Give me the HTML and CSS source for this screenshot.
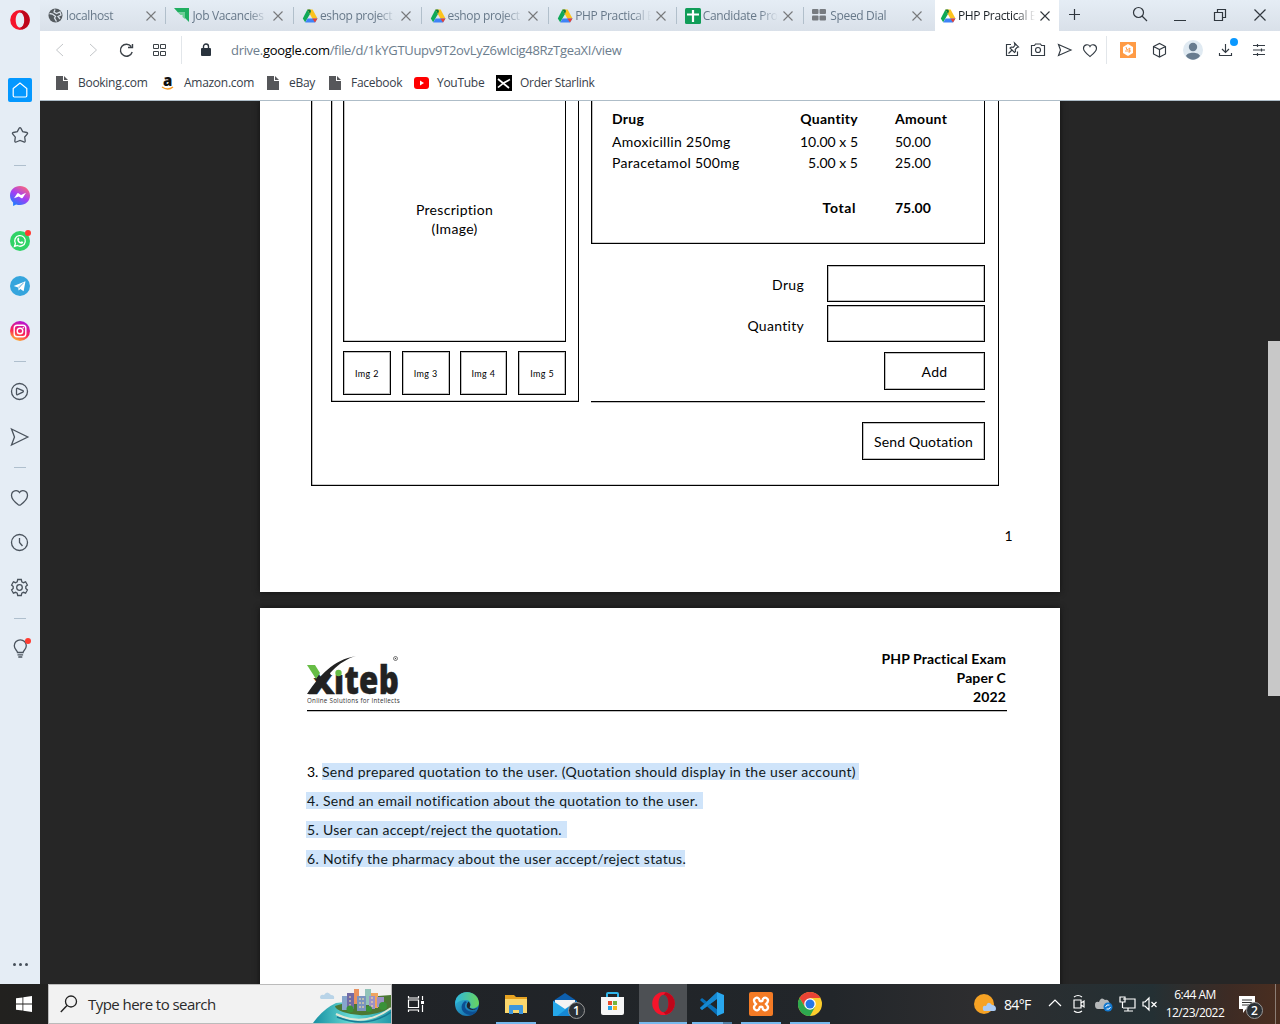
FILE: index.html
```html
<!DOCTYPE html>
<html lang="en">
<head>
<meta charset="utf-8">
<title>PHP Practical Exam</title>
<link rel="stylesheet" href="styles.css">
</head>
<body>
<svg width="0" height="0" class="sprite">
  <symbol id="drive" viewBox="0 0 16 16"><path fill="#0fa958" d="M5.400 1.500 8 6 3.200 14.300.8 10.600z"/><path fill="#fcc31e" d="M5.400 1.500h5.200l4.900 9h-5.200z"/><path fill="#3f83f8" d="M3.200 14.400 5.600 10.400H15.500L13 14.400z"/><path fill="#e94235" d="m10.300 10.400h5.200L13 14.400z"/><path fill="#0a7a3b" d="M5.400 1.500h2.800L9 3 8 6z"/></symbol>
  <symbol id="x" viewBox="0 0 10 10"><path d="m.5.5 9 9m0-9-9 9" fill="none" stroke="currentColor" stroke-width="1.1"/></symbol>
  <symbol id="doc" viewBox="0 0 12 14"><path fill="#56575a" d="M0 0h7v5h5v9H0z"/><path fill="#56575a" d="M8 0l4 4H8z"/></symbol>
  <symbol id="opera" viewBox="0 0 20 20"><path fill="#f5142b" fill-rule="evenodd" d="M10 0a9.800 10 0 1 0 0 20 9.800 10 0 0 0 0-20zm0 2.400c2.500 0 4.300 3.300 4.300 7.600s-1.800 7.600-4.300 7.600-4.300-3.300-4.300-7.600 1.800-7.600 4.300-7.600z"/><path fill="#a70014" d="M12 .2a9.800 10 0 0 1 0 19.600l-2-2.200c2.500 0 4.300-3.300 4.300-7.600S12.500 2.400 10 2.400z" opacity=".7"/></symbol>
</svg>
<div class="screen">
  <nav class="sidebar">
    <div class="logo"><svg width="20" height="20"><use href="#opera"/></svg></div>
    <div class="slot"><span class="home"><svg width="24" height="24" viewBox="0 0 24 24"><path d="M5.200 10.500 12 5l6.800 5.500v7.300q0 1.200-1.200 1.200H6.400q-1.200 0-1.200-1.200z" stroke="#fff" stroke-width="1.200"/></svg></span></div>
    <div class="slot"><svg width="20" height="20" viewBox="0 0 20 20"><path d="M9.200 3.200q.8-1.200 1.600 0l1.900 3.400 4 .9q1.500.4.500 1.600l-2.500 2.900.5 4q0 1.400-1.400.9L10 15.400 6.200 17q-1.400.5-1.400-.9l.5-4L2.800 9.200q-1-1.300.5-1.700l4-.9z"/></svg></div>
    <div class="rule"></div>
    <div class="slot"><svg width="20" height="20" viewBox="0 0 20 20"><defs><linearGradient id="ms" x1=".2" y1="1" x2=".8" y2="0"><stop offset="0" stop-color="#1283ff"/><stop offset=".5" stop-color="#a43df5"/><stop offset="1" stop-color="#ff6a75"/></linearGradient></defs><path stroke="none" fill="url(#ms)" d="M10 0C4.400 0 0 4 0 9.500c0 2.900 1.200 5.300 3.100 7V20l3-1.500q2 .6 3.900.6c5.600 0 10-4 10-9.500S15.600 0 10 0z"/><path stroke="none" fill="#fff" d="m4 12.300 3-4.600q.8-1 1.800-.3l2.200 1.700 5-2.300-3.200 5q-.8.900-1.700.3L8.800 10.400z"/></svg></div>
    <div class="slot"><span class="dotted"><svg width="20" height="20" viewBox="0 0 20 20"><circle cx="10" cy="10" r="10" fill="#2fd366" stroke="none"/><path stroke="#fff" stroke-width="1.300" d="m4.500 15.500.9-3a5.300 5.300 0 1 1 2 2z"/><path fill="#fff" stroke="none" d="M7.600 7q.8-.9 1.300.1l.5 1.200-.6.9q.8 1.400 2.100 1.800l.8-.8 1.600.8q0 1.900-2 1.800Q7.700 12 7.200 8.700z"/></svg><i></i></span></div>
    <div class="slot"><svg width="20" height="20" viewBox="0 0 20 20"><circle cx="10" cy="10" r="10" fill="#35a5dd" stroke="none"/><path fill="#fff" stroke="none" d="M3.700 9.900 15.500 5.200l-1.900 10-3.300-2.300-1.700 1.700-.5-3.200z"/><path stroke="#7fbfe2" stroke-width=".8" d="m8 11.500 5.500-4.600-4.800 5.600"/></svg></div>
    <div class="slot"><svg width="20" height="20" viewBox="0 0 20 20"><defs><linearGradient id="ig" x1=".2" y1="1" x2=".6" y2="0"><stop offset="0" stop-color="#ffc52e"/><stop offset=".45" stop-color="#fb1f55"/><stop offset="1" stop-color="#b615d8"/></linearGradient></defs><circle cx="10" cy="10" r="10" fill="url(#ig)" stroke="none"/><g stroke="#fff" stroke-width="1.400"><rect x="4.200" y="4.200" width="11.600" height="11.600" rx="3"/><circle cx="10" cy="10" r="2.800"/></g><circle cx="13.300" cy="6.700" r=".8" fill="#fff" stroke="none"/></svg></div>
    <div class="rule"></div>
    <div class="slot"><svg width="20" height="20" viewBox="0 0 20 20"><circle cx="9.500" cy="9.500" r="8"/><path d="M6.500 7q.1-1 1.100-.7l5.200 2.300q1.200.7 0 1.500l-5.200 2.600q-1 .3-1.100-.7z"/></svg></div>
    <div class="slot"><svg width="20" height="20" viewBox="0 0 20 20"><path d="m1.500 2 16.300 8-16.300 8 3-8z"/></svg></div>
    <div class="rule"></div>
    <div class="slot"><svg width="20" height="20" viewBox="0 0 20 20"><path d="M9.500 4.500C7.500 1.300 1.500 2.100 1.500 7.500c0 4 4.500 7.500 6.800 9.200q1.200.8 2.400 0C13 15 17.500 11.500 17.500 7.500c0-5.400-6-6.200-8-3z"/></svg></div>
    <div class="slot"><svg width="20" height="20" viewBox="0 0 20 20"><circle cx="9.500" cy="9.500" r="8"/><path d="M9.500 5V9.500l3 3.500"/></svg></div>
    <div class="slot"><svg width="20" height="20" viewBox="0 .5 20 20"><circle cx="9.500" cy="10" r="2.800"/><path d="M7.700 2h3.600l.5 2.300 1.600.9 2.200-.9 1.800 3.200-1.600 1.500v2l1.600 1.500-1.800 3.200-2.200-.9-1.600.9-.5 2.300H7.700l-.5-2.300-1.600-.9-2.200.9-1.800-3.200L3.200 11V9L1.600 7.500l1.800-3.200 2.200.9 1.600-.9z"/></svg></div>
    <div class="rule"></div>
    <div class="slot"><span class="dotted"><svg width="20" height="20" viewBox="0 0 20 20"><path d="M7.500 13.500c0-2-3.200-3-3.200-6.700a6 6 0 0 1 12 0c0 3.700-3.200 4.700-3.200 6.700zM7.500 15.800h5.600M8.300 18h4"/></svg><i></i></span></div>
    <div class="more"><b></b><b></b><b></b></div>
  </nav>
  <div class="browser">
    <div class="tabs">
      <div class="tab narrow"><svg width="16" height="16" viewBox="0 0 16 16"><circle cx="7.500" cy="7.500" r="7" fill="#555b60"/><path d="M1.500 5.500l3 .5 3 2.500-1 1.500 2 3.500M7 1.500 6 4l2.500 1.500L12 4l1 3-3 1.500 2 2.500" fill="none" stroke="#dbe2ea" stroke-width="1.300"/></svg><span>localhost</span><svg class="close"><use href="#x"/></svg></div>
      <div class="tab"><svg width="16" height="16" viewBox="0 0 16 16"><path fill="#1fae60" d="M0 0h15v14l-4-4V4.500H4z"/><path fill="#6bcf94" d="M4 4.500h7v6.500L8.500 9V7H6.500z"/></svg><span>Job Vacancies</span><svg class="close"><use href="#x"/></svg></div>
      <div class="tab"><svg width="16" height="16"><use href="#drive"/></svg><span>eshop project - Google</span><svg class="close"><use href="#x"/></svg></div>
      <div class="tab"><svg width="16" height="16"><use href="#drive"/></svg><span>eshop project - Google</span><svg class="close"><use href="#x"/></svg></div>
      <div class="tab"><svg width="16" height="16"><use href="#drive"/></svg><span>PHP Practical Exam</span><svg class="close"><use href="#x"/></svg></div>
      <div class="tab"><svg width="16" height="16" viewBox="0 0 16 16"><rect width="16" height="16" rx="1.500" fill="#109d58"/><path d="M2 6.500h12M8 2v12" stroke="#fff" stroke-width="2.200"/></svg><span>Candidate Progress</span><svg class="close"><use href="#x"/></svg></div>
      <div class="tab last"><svg width="16" height="16" viewBox="0 0 16 16"><g fill="#777b80"><rect x="0" y="1" width="6.500" height="5" rx="1"/><rect x="7.500" y="1" width="6.500" height="5" rx="1"/><rect x="0" y="7.500" width="6.500" height="5" rx="1"/><rect x="7.500" y="7.500" width="6.500" height="5" rx="1"/></g></svg><span>Speed Dial</span><svg class="close"><use href="#x"/></svg></div>
      <div class="tab active"><svg width="16" height="16"><use href="#drive"/></svg><span>PHP Practical Exam</span><svg class="close"><use href="#x"/></svg></div>
      <svg class="window" width="221" height="31" viewBox="0 0 221 31"><path d="M10 14.500h11M15.500 9v11"/><circle cx="79.500" cy="12.500" r="5"/><path d="m83 16 5 5M115 20.500h12M155.500 12.500h8v8h-8zM158.500 12v-2.500h8v8H164M195.500 9.500l11 11m0-11-11 11"/></svg>
    </div>
    <div class="address">
      <svg width="142" height="38" viewBox="0 0 142 38"><path stroke="#c3c6c9" d="m23 13-6.500 6 6.500 6M50 13l6.500 6-6.500 6"/><g stroke="#3c4248"><path stroke-width="1.400" d="M92.200 21a6 6 0 1 1-1-5.500M92.500 13v3.500H88"/><path d="M113.500 13.500h5v4h-5zM120.500 13.500h5v4h-5zM113.500 20.500h5v4h-5zM120.500 20.500h5v4h-5z"/></g><path stroke="#e2e6ea" d="M141.500 5v28"/></svg>
      <svg class="lock" width="12" height="14" viewBox="0 0 12 14"><rect x="1" y="5" width="10" height="8" rx="1" fill="#29333d"/><path d="M3.500 6V3.500a2.500 2.500 0 0 1 5 0V6" stroke="#29333d" stroke-width="1.400"/></svg>
      <span class="url">drive.<em>google.com</em>/file/d/1kYGTUupv9T2ovLyZ6wIcig48RzTgeaXI/view</span>
      <svg width="280" height="38" viewBox="0 0 280 38"><g stroke="#333b43" stroke-width="1.150"><path d="M11 13.500H6.500v11h11V20.500M14.500 12l4 4-1.500.5-1.800 2 .3 2-1 1L10 17l1.200-1 2 .3 1.800-2zM12 19l-3.500 3.500M31.500 14.500h3l1-1.500h5l1 1.500h3v10h-13z"/><circle cx="38" cy="19" r="2.500"/><path d="m58.500 13.500 12.500 5.500-12.500 5.500 2-5.500zM90 15.500c-1.500-2.800-6.500-2.200-6.500 2 0 3 4 6 6.500 8 2.500-2 6.500-5 6.500-8 0-4.200-5-4.800-6.500-2zM153.500 15.500l6-3 6 3v7.500l-6 3-6-3zM153.500 15.500l6 3 6-3M159.500 18.500V26"/><path d="M219.500 22v2.500h12V22M225.500 13v8.500M222 18l3.500 3.500L229 18M253 14.500h12M253 19h12M253 23.500h12M257.500 13v3M261.500 17.500v3M257.500 22v3"/></g><path stroke="#e2e6ea" d="M106.500 5v28"/><rect x="120" y="11" width="16" height="16" fill="#ff9b45"/><path fill="#fff" d="m128 13 5 3v6l-5 3-5-3v-6z"/><path stroke="#ffa055" d="m126 16 1 3 3-2-1 5M125 20h6"/><circle cx="193" cy="19" r="10" fill="#e0eaf2"/><circle cx="193" cy="16" r="4.200" fill="#687c8f"/><path fill="#687c8f" d="M186 25c1-4.500 13-4.500 14 0-4 5-10 5-14 0z"/><circle cx="234" cy="11" r="4" fill="#0a98ff"/></svg>
    </div>
    <div class="bookmarks">
      <svg width="12" height="14"><use href="#doc"/></svg><span style="width:83px">Booking.com</span>
      <svg width="14" height="15" viewBox="0 0 14 15"><text x="2" y="11" font-family="Open Sans" font-weight="800" font-size="15" fill="#111">a</text><path d="M1 12q6 4 11 0" stroke="#f7981d" stroke-width="1.400"/></svg><span class="amz" style="width:83px">Amazon.com</span>
      <svg width="12" height="14"><use href="#doc"/></svg><span style="width:40px">eBay</span>
      <svg width="12" height="14"><use href="#doc"/></svg><span style="width:63px">Facebook</span>
      <svg width="15" height="12" viewBox="0 0 15 12"><rect width="15" height="12" rx="3" fill="#f00"/><path fill="#fff" d="m6 3.500 4 2.500-4 2.500z"/></svg><span class="yt" style="width:59px">YouTube</span>
      <svg width="16" height="16" viewBox="0 0 16 16"><rect width="16" height="16" fill="#000"/><path d="m2 4 11 9M2 12.500q5-5 12-8" stroke="#fff" stroke-width="1.700"/></svg><span class="yt">Order Starlink</span>
    </div>
    <main class="viewer">
      <div class="pages">
        <section class="sheet first">
          <div class="wire">
            <div class="gallery">
              <div class="preview">Prescription<br>(Image)</div>
              <div class="thumbs"><div>Img 2</div><div>Img 3</div><div>Img 4</div><div>Img 5</div></div>
            </div>
            <div class="quote">
              <div class="table">
                <div class="row head"><span>Drug</span><span>Quantity</span><span>Amount</span></div>
                <div class="row"><span>Amoxicillin 250mg</span><span class="num">10.00 x 5</span><span class="num">50.00</span></div>
                <div class="row"><span>Paracetamol 500mg</span><span class="num">5.00 x 5</span><span class="num">25.00</span></div>
                <div class="row total"><span></span><span>Total</span><span class="num">75.00</span></div>
              </div>
              <div class="field drug"><label>Drug</label><div class="input"></div></div>
              <div class="field"><label class="low">Quantity</label><div class="input"></div></div>
              <div class="btn add">Add</div>
              <div class="line"></div>
              <div class="btn send">Send Quotation</div>
            </div>
          </div>
          <div class="number">1</div>
        </section>
        <section class="sheet second">
          <header>
            <svg width="96" height="52" viewBox="0 0 96 52"><g fill="#222" stroke="#222" stroke-width=".5"><text x="2" y="38" font-family="Open Sans" font-weight="800" font-size="30" textLength="26" lengthAdjust="spacingAndGlyphs">X</text><text x="27" y="38" font-family="Open Sans" font-weight="800" font-size="38" textLength="65" lengthAdjust="spacingAndGlyphs">iteb</text></g><path fill="#fff" d="M0 8h14l-1 9-4 5H0zM20 12h16v7H24zM27 7h9v11h-9z"/><path fill="#222" d="M0 38c13-19 26-34 49-38C31 5 18 21 9 38z"/><path fill="#67bd45" d="M0 9h8l5 8-4 6z"/><circle cx="31.500" cy="17" r="3.200" fill="#67bd45"/><circle cx="88.500" cy="2.500" r="2" stroke="#444" stroke-width=".7"/><circle cx="88.500" cy="2.500" r=".7" fill="#444"/><text x="0" y="47" font-family="Open Sans" font-size="7.200" fill="#333" textLength="93" lengthAdjust="spacingAndGlyphs">Online Solutions for Intellects</text></svg>
            <div class="title">PHP Practical Exam<br>Paper C<br>2022</div>
          </header>
          <ol>
            <li><span>3. </span><mark class="a">Send prepared quotation to the user. (Quotation should display in the user account)</mark></li>
            <li><mark class="b">4. Send an email notification about the quotation to the user.</mark></li>
            <li><mark class="c">5. User can accept/reject the quotation.</mark></li>
            <li><mark class="d">6. Notify the pharmacy about the user accept/reject status.</mark></li>
          </ol>
        </section>
      </div>
      <div class="scroll"><div></div></div>
    </main>
  </div>
  <footer class="taskbar">
    <div class="start"><svg width="16" height="16" viewBox="0 0 16 16"><path fill="#fff" d="M0 2.300 6.500 1.400v6.200H0zM7.300 1.300 16 0v7.600H7.300zM0 8.400h6.500v6.200L0 13.700zM7.300 8.400H16V16l-8.700-1.300z"/></svg></div>
    <div class="search"><svg width="18" height="18" viewBox="0 0 18 18"><circle cx="11" cy="6.500" r="5.500" stroke="#222" stroke-width="1.300"/><path d="M7 10.500.8 17" stroke="#222" stroke-width="1.400"/></svg><span>Type here to search</span>
      <svg class="city" width="80" height="38" viewBox="0 0 80 38"><defs><linearGradient id="sea"><stop stop-color="#168fa2"/><stop offset=".5" stop-color="#69dcd5"/><stop offset="1" stop-color="#239aaa"/></linearGradient></defs><path fill="url(#sea)" d="M2 38Q12 24 25 18L80 12v26z"/><path fill="#4b7834" d="M24 21q16-5 30-9l26-2v13q-25 12-48 4-8-3-8-6z"/><path d="M25 29q28 14 55-6" stroke="#dfe7d6" stroke-width="2"/><path d="M26 32q30 12 54-5" stroke="#187b96" stroke-width="1.500"/><path fill="#b9d4e8" d="M9 13q0-4 4-3 3-5 7 0 4 0 3 4H10z"/><g><path fill="#86a5cc" d="M31 11h5v14h-5z"/><path fill="#716aa6" d="M36 8h7v16h-7z"/><path fill="#e9925e" d="M43 4h5v15h-5z"/><path fill="#91c3b8" d="M54 4h6v16h-6z"/><path fill="#7a94bf" d="M46 11h9v15h-9z"/><path fill="#f0a35e" d="M60 8h7v15h-7z"/><path fill="#9c91c7" d="M58 11h6v13h-6zM66 12h7v10h-7z"/></g><path stroke="#ffe69d" stroke-dasharray="2 2" d="M49 13v10M52 13v10M61 12v10M39 11v10"/><g fill="#3a9238"><circle cx="39" cy="24" r="3.500"/><circle cx="72" cy="21" r="4"/><circle cx="58" cy="24" r="3"/></g></svg></div>
    <div class="view"><svg width="18" height="18" viewBox="0 0 18 18"><g stroke="#fff" stroke-width="1.200"><path d="M1.500 5h10v7.500h-10zM1.500 1v2h10V1M1.500 17v-2h10v2M15.500 1v4M15.500 10v7"/></g><path fill="#fff" d="M14 6h3v3h-3z"/></svg></div>
    <div class="apps">
      <div><svg width="24" height="24" viewBox="0 0 24 24"><defs><linearGradient id="ed" y2="1"><stop stop-color="#35c1d8"/><stop offset="1" stop-color="#0c59a4"/></linearGradient><linearGradient id="eg"><stop stop-color="#2eb8e0"/><stop offset="1" stop-color="#69d45c"/></linearGradient></defs><circle cx="12" cy="12" r="12" fill="url(#ed)"/><path fill="url(#eg)" d="M.5 9C3-3 23-3 24 11c0 5-7 7-9.500 4 2-2 1.500-7-4-7-5 0-8 2-10 4z"/><path fill="#0c4f93" d="M10 9c-6 4-4 13 5 14 3 0 6-2 7-4-7 2-12-1-12-5q0-3 2-4z"/><path fill="#22262a" d="M13.500 9.500q3 3 1 6 3 3 8 .6-5 4-10-.1-2-3 1-6.500z"/></svg></div>
      <div class="open"><svg width="22" height="19" viewBox="0 0 22 19"><path fill="#e7a322" d="M0 0h9l2 2h11v5H0z"/><path fill="#fbd76c" d="M0 4h22v14H0z"/><path fill="#3e97dd" d="M4 19V11q0-1 1-1h12q1 0 1 1v8h-4v-4H8v4z"/></svg></div>
      <div class="mail"><svg width="24" height="23" viewBox="0 0 24 23"><path fill="#0d5fae" d="M0 8 12 0l12 8v15H0z"/><path fill="#f3f3f3" d="M2 7h20v5l-10 7-10-7z"/><path fill="#25a8ea" d="m0 8 12 8L24 8v15H0z"/><path fill="#1688d4" d="M24 8v15H4z"/></svg><b>1</b></div>
      <div class="store"><svg width="23" height="24" viewBox="0 0 23 24"><path d="M6 6V2q0-1 1-1h9q1 0 1 1v4" stroke="#31b6eb" stroke-width="2"/><path fill="#f6f6f6" d="M0 5h23v16q0 2-2 2H2q-2 0-2-2z"/><path fill="#e94d2b" d="M7 9h4v4H7z"/><path fill="#75b43c" d="M12 9h4v4h-4z"/><path fill="#24a4e8" d="M7 14h4v4H7z"/><path fill="#f5b71d" d="M12 14h4v4h-4z"/></svg></div>
      <div class="current"><svg width="23" height="23"><use href="#opera"/></svg></div>
      <div class="open stack"><svg width="24" height="24" viewBox="0 0 24 24"><path fill="#0870b9" d="m0 8 2-2 16 12v6L1 9zM0 16l2 2L18 6V0L1 15z"/><path fill="#29a7ee" d="m17 0 7 3v18l-7 3z"/><path fill="#1689d2" d="M0 16 17 0v7L2 18z"/></svg></div>
      <div class="open"><svg width="24" height="24" viewBox="0 0 24 24"><rect width="24" height="24" rx="2" fill="#f47b25"/><path d="M5.500 7c2-2.500 5-1 5 1.500 0 1 3 1 3 0 0-2.500 3-4 5-1.500 1.500 2 0 3.500-1.500 5 1.500 1.500 3 3 1.500 5-2 2.500-5 1-5-1.500 0-1-3-1-3 0 0 2.500-3 4-5 1.500-1.500-2 0-3.500 1.500-5-1.500-1.500-3-3-1.500-5z" stroke="#fff" stroke-width="2.300"/></svg></div>
      <div class="open"><svg width="24" height="24" viewBox="0 0 24 24"><circle cx="12" cy="12" r="12" fill="#fccd2c"/><path fill="#e94335" d="M1.600 6a12 12 0 0 1 20.800 0H12L7 15z"/><path fill="#2da94f" d="M1.600 6A12 12 0 0 0 12 24l5-9H7z"/><circle cx="12" cy="12" r="5.800" fill="#fff"/><circle cx="12" cy="12" r="4.500" fill="#2577e7"/></svg></div>
    </div>
    <div class="weather"><svg width="22" height="20" viewBox="0 0 22 20"><circle cx="10" cy="10" r="10" fill="#f6a224"/><path fill="#abcbf3" d="M9 16q-1-5 3-4 2-6 6-1 4 0 4 4 0 2-2 2H10z"/></svg><span>84°F</span></div>
    <svg width="114" height="20" viewBox="0 0 114 20"><g stroke="#fff" stroke-width="1.200"><path d="m1 12 6-6 6 6M26 6h7v8h-7zM33 9l3-2v6l-3-2M26 3q4-3 8 0M26 17q4 3 8 0M75 5h12v9H75M80 14v3M76 17h9M72 3h5v5h-5zM74.500 8v6M95 8h2l4-4v12l-4-4h-2zM103.500 8l5 5m0-5-5 5"/></g><path fill="#b5b8b9" d="M47 11q0-4 4-3 2-6 6-2 4-1 5 5v4H50q-3 0-3-4z"/><circle cx="60" cy="13" r="4.500" fill="#1479cf"/><path d="M57.500 13q1-3 4-2M62.500 13q-1 3-4 2" stroke="#fff"/></svg>
    <div class="clock"><span>6:44 AM</span><span>12/23/2022</span></div>
    <div class="notice"><svg width="17" height="17" viewBox="0 0 17 17"><path fill="#fff" d="M0 0h16v13h-9l-3 4v-4H0z"/><path d="M3 4h10M3 6.500h10M3 9h7" stroke="#333"/></svg><b>2</b></div>
  </footer>
</div>
</body>
</html>
```
FILE: styles.css
```css
* { box-sizing: border-box; }
body { margin: 0; font-family: "Open Sans", "Noto Sans", sans-serif; overflow: hidden; }
svg { fill: none; flex: none; display: block; }
.sprite { position: absolute; }
.screen { width: 1280px; height: 1024px; display: grid; grid-template: 984px 40px / 40px 1240px; }

.sidebar { background: #e5edf5; display: flex; flex-direction: column; }
.sidebar svg { stroke: #4a535d; stroke-width: 1.3; }
.sidebar .logo svg { stroke: none; }
.logo { height: 40px; margin-bottom: 27px; display: grid; place-items: center; }
.slot { height: 45px; display: grid; place-items: center; }
.home { width: 24px; height: 24px; background: #0398ff; border-radius: 2px; }
.rule { height: 16px; display: grid; place-items: center; }
.rule::before { content: ""; width: 12px; height: 1px; background: #afbfcd; }
.dotted { position: relative; }
.dotted i { position: absolute; right: -1px; top: -1px; width: 6px; height: 6px; border-radius: 50%; background: #ff3b30; }
.more { margin: auto 0 18px; display: flex; gap: 3px; justify-content: center; }
.more b { width: 3px; height: 3px; border-radius: 50%; background: #46505a; }

.browser { display: grid; grid-template-rows: 31px 38px 32px 1fr; }
.tabs { display: flex; background: linear-gradient(#e5edf5, #d9e0e9); color: #68798a; font-size: 12px; }
.tab { width: 127.6px; padding: 0 11px 0 8px; display: flex; align-items: center; background: linear-gradient(#b1bfcb, #b1bfcb) right 7px / 1px 17px no-repeat; }
.tab.narrow { width: 126.4px; padding-right: 10px; }
.tab.last { background: none; width: 130.6px; padding-right: 13px; }
.tab.active { width: 124px; padding-left: 5px; padding-right: 9px; background: #fff; color: #1c2227; }
.tab span { flex: 1; overflow: hidden; white-space: nowrap; margin: 0 5px 0 2px; letter-spacing: -.35px; -webkit-mask-image: linear-gradient(90deg, #000 75%, transparent); }
.close { width: 10px; height: 10px; color: #77797b; }
.active .close { color: #30363b; }
.window { stroke: #30373e; stroke-width: 1.2; }
.address { display: flex; align-items: center; background: #fff; }
.lock { margin: 0 19px 0 18px; }
.url { flex: 1; font-size: 13px; color: #6c7d8d; letter-spacing: -.31px; }
.url em { font-style: normal; color: #000; }
.bookmarks { display: flex; align-items: center; background: #fff; border-bottom: 1px solid #aebdc8; padding: 0 0 4px 16px; font-size: 12px; color: #37404a; white-space: nowrap; }
.bookmarks span { margin-left: 10px; letter-spacing: -.28px; }
.bookmarks .amz { margin-left: 9px; }
.bookmarks .yt { margin-left: 8px; }

.viewer { background: #262626; display: flex; justify-content: flex-end; font-family: Lato, sans-serif; font-size: 14px; letter-spacing: .3px; color: #000; min-height: 0; overflow: hidden; }
.pages { width: 800px; margin-right: 208px; }
.sheet { background: #fff; box-shadow: 0 0 6px #111; }
.wire, .gallery, .preview, .thumbs div, .table, .input, .btn { border: 1px solid #000; box-shadow: inset 0 0 0 1px rgba(0, 0, 0, .25); }
.wire, .gallery, .preview, .table { border-top: 0; box-shadow: inset 0 -1px rgba(0, 0, 0, .2), inset 1px 0 rgba(0, 0, 0, .25); }
.first { height: 491px; margin-bottom: 16px; padding-left: 51px; }
.wire { width: 688px; height: 385px; padding-left: 19px; display: flex; gap: 12px; }
.gallery { width: 248px; height: 301px; padding: 0 12px 0 11px; }
.preview { height: 241px; width: 223px; text-align: center; line-height: 19px; padding-top: 99px; margin-bottom: 9px; }
.thumbs { display: flex; gap: 10px; width: 223px; }
.thumbs div { width: 48px; height: 44px; display: grid; place-items: center; font-size: 9px; }
.thumbs div:first-child { margin-right: 1px; }
.thumbs div:last-child { margin-left: 1px; }
.quote { width: 394px; display: flex; flex-direction: column; }
.table { height: 143px; padding: 7px 0 0 20px; }
.row { display: grid; grid-template-columns: 176px 70px 1fr; height: 21px; line-height: 21px; }
.row span:nth-child(2) { text-align: right; }
.row span:nth-child(3) { margin-left: 37px; }
.row .num { letter-spacing: 0; }
.row.head { height: 23px; font-weight: 700; }
.row.total { font-weight: 700; margin-top: 24px; }
.row.total span:nth-child(2) { margin-right: 2px; letter-spacing: .6px; }
.field { display: flex; justify-content: flex-end; align-items: center; margin-bottom: 3px; }
.field label { padding-top: 1px; }
.field .low { padding-top: 4px; }
.drug { margin-top: 21px; }
.input { width: 158px; height: 37px; margin-left: 23px; }
.btn { align-self: flex-end; height: 38px; display: grid; place-items: center; }
.add { width: 101px; margin-top: 7px; }
.line { height: 1px; background: #000; box-shadow: 0 1px rgba(0, 0, 0, .25); margin: 11px 0 20px; }
.send { width: 123px; letter-spacing: .15px; }
.number { text-align: right; margin: 40px 47px 0 0; line-height: 20px; }
.second { height: 400px; padding: 42px 53px 0 46px; }
header { display: flex; justify-content: space-between; border-bottom: 1px solid #000; box-shadow: 0 1px rgba(0, 0, 0, .25); height: 61px; margin-left: 1px; padding: 6px 1px 0 0; }
.title { font-weight: 700; text-align: right; line-height: 19px; margin-top: -7px; letter-spacing: .12px; }
ol { list-style: none; margin: 46px 0 0; padding: 0; }
li { height: 29px; line-height: 29px; display: flex; align-items: center; }
li > span { width: 16px; padding-left: 1px; white-space: nowrap; letter-spacing: 0; }
mark { background: #cfe4fa; color: #101820; line-height: 17px; height: 17px; white-space: nowrap; padding-left: 1px; }
.a { width: 537px; padding-left: 0; }
.b { width: 397px; }
.c { width: 261px; }
.d { width: 379px; }
.scroll { width: 12px; background: #262626; padding-top: 240px; }
.scroll div { height: 355px; background: #c8c8c8; }

.taskbar { grid-column: 1 / 3; display: flex; align-items: center; background: linear-gradient(90deg, #22211f, #202327 30%, #22262a 65%, #2d2d2f 76%, #243034 90%, #3d2b24 96%, #4a2e20); color: #fff; }
.start { width: 48px; display: grid; place-items: center; }
.search { width: 344px; height: 40px; background: #f2f2f2; border: 1px solid #bbb; padding-left: 11px; display: flex; align-items: center; color: #2b2b2b; font-size: 15px; }
.search span { margin-left: 10px; flex: 1; letter-spacing: -.55px; }
.view { width: 51px; padding-left: 15px; }
.apps { display: flex; gap: 1px; height: 40px; }
.apps > div { width: 48px; display: grid; place-items: center; position: relative; }
.apps .store { padding-right: 3px; }
.current { background: #4d5054; border-bottom: 2px solid #76b9ed; }
.open { background: linear-gradient(#76b9ed, #76b9ed) 50% 100% / 40px 2px no-repeat; }
.stack { background: linear-gradient(90deg, #76b9ed 31px, #507fa4 31px) 50% 100% / 40px 2px no-repeat; }
.mail b, .notice b { position: absolute; width: 17px; height: 17px; border: 1px solid #999; border-radius: 50%; background: #2b3035; font-size: 12px; font-weight: 600; line-height: 15px; text-align: center; left: 27px; top: 18px; }
.weather { margin-left: 140px; display: flex; align-items: center; gap: 8px; font-size: 14px; letter-spacing: -.65px; width: 74px; white-space: nowrap; }
.clock { width: 66px; display: flex; flex-direction: column; align-items: center; font-size: 12px; line-height: 18px; letter-spacing: -.5px; }
.notice { margin-left: 11px; position: relative; border-right: 1px solid #8b7d75; height: 40px; width: 37px; padding-top: 12px; }
.notice b { left: 7px; }
```
